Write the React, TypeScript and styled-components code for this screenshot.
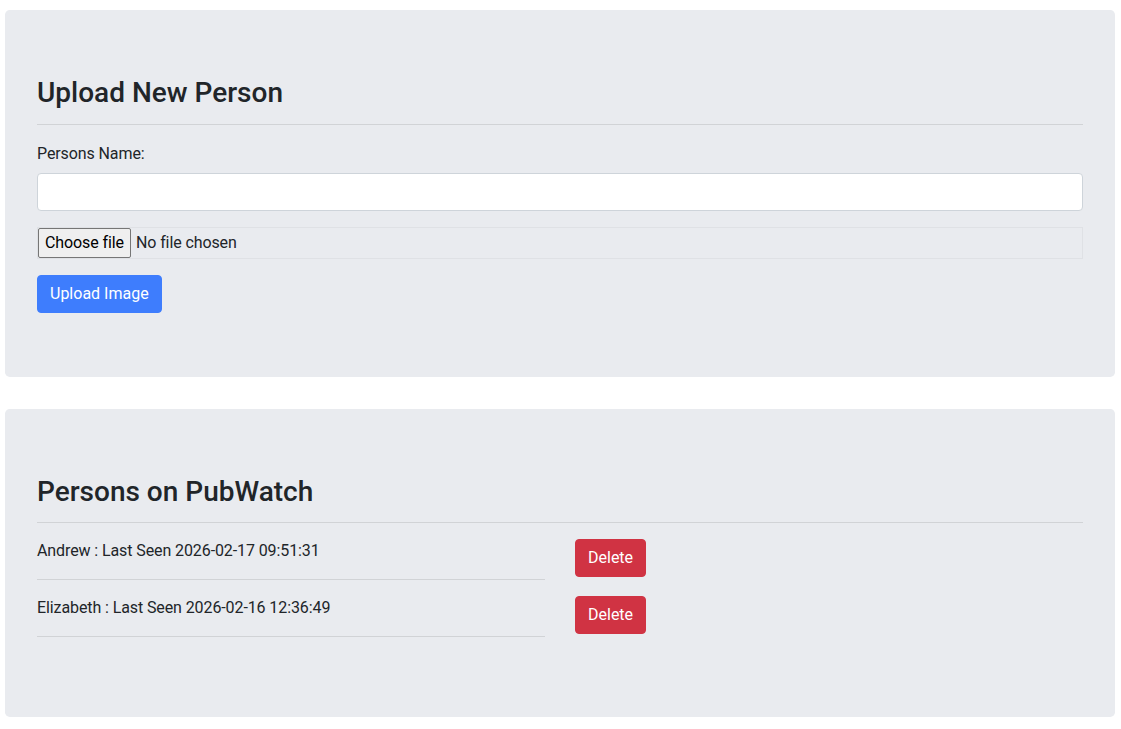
import React from "react";
import styled, { createGlobalStyle } from "styled-components";

const GlobalStyle = createGlobalStyle`
  *, *::before, *::after { box-sizing: border-box; }
  body {
    margin: 0;
    background: #ffffff;
    color: #212529;
    font-family: Roboto, "Liberation Sans", sans-serif;
    font-size: 16px;
    line-height: 1.5;
    letter-spacing: -0.1px;
  }
`;

const Page = styled.main`
  display: flex;
  flex-direction: column;
  gap: 32px;
  padding: 10px 6px 12px 5px;
`;

const Jumbotron = styled.section`
  background: #e9ebef;
  border-radius: 4.8px;
  padding: 64px 32px;
`;

const Title = styled.h3`
  margin: 0;
  padding-top: 4px;
  font-size: 28px;
  font-weight: 500;
  line-height: 29.6px;
  letter-spacing: 0;
`;

const Rule = styled.hr`
  margin: 16px 0;
  border: 0;
  border-top: 1px solid rgba(0, 0, 0, 0.1);
`;

const FormGroup = styled.div`
  display: flex;
  flex-direction: column;
  margin-bottom: 16px;
`;

const Label = styled.label`
  margin-bottom: 8px;
  padding-top: 1px;
  line-height: 23px;
`;

const TextInput = styled.input`
  height: 38px;
  padding: 6px 12px;
  font: inherit;
  color: #495057;
  background: #fff;
  border: 1px solid #ced4da;
  border-radius: 4px;
  outline: none;
`;

const FileBox = styled.div`
  display: flex;
  align-items: center;
  gap: 5px;
  height: 32px;
  padding: 0;
  border: 1px solid #dfe1e5;
  margin-bottom: 16px;
`;

const ChooseButton = styled.button`
  height: 30px;
  padding: 0 6px;
  font-family: Roboto, "Liberation Sans", sans-serif;
  font-size: 16px;
  letter-spacing: -0.1px;
  color: #000;
  background: #efefef;
  border: 1px solid #767676;
  border-radius: 2px;
`;

const FileText = styled.span`
  color: #212529;
`;

const Button = styled.button<{ $variant: "primary" | "danger" }>`
  align-self: flex-start;
  justify-self: start;
  height: 38px;
  padding: 6px 12px;
  font: inherit;
  color: #fff;
  background: ${(p) => (p.$variant === "primary" ? "#3e7dfd" : "#d03343")};
  border: 1px solid ${(p) => (p.$variant === "primary" ? "#3e7dfd" : "#d03343")};
  border-radius: 4px;
  cursor: pointer;
`;

const PersonRow = styled.div`
  display: grid;
  grid-template-columns: 508px auto;
  column-gap: 30px;
  align-items: start;
`;

const PersonInfo = styled.div`
  display: flex;
  flex-direction: column;
`;

const PersonText = styled.p`
  margin: 0;
`;

const persons = [
  { name: "Andrew", seen: "2026-02-17 09:51:31" },
  { name: "Elizabeth", seen: "2026-02-16 12:36:49" },
];

export default function App() {
  return (
    <>
      <GlobalStyle />
      <Page>
        <Jumbotron>
          <Title>Upload New Person</Title>
          <Rule />
          <FormGroup>
            <Label htmlFor="name">Persons Name:</Label>
            <TextInput id="name" type="text" />
          </FormGroup>
          <FileBox>
            <ChooseButton type="button">Choose file</ChooseButton>
            <FileText>No file chosen</FileText>
          </FileBox>
          <Button $variant="primary" type="button">Upload Image</Button>
        </Jumbotron>
        <Jumbotron>
          <Title>Persons on PubWatch</Title>
          <Rule />
          {persons.map((p) => (
            <PersonRow key={p.name}>
              <PersonInfo>
                <PersonText>
                  {p.name} : Last Seen {p.seen}
                </PersonText>
                <Rule />
              </PersonInfo>
              <Button $variant="danger" type="button">Delete</Button>
            </PersonRow>
          ))}
        </Jumbotron>
      </Page>
    </>
  );
}
